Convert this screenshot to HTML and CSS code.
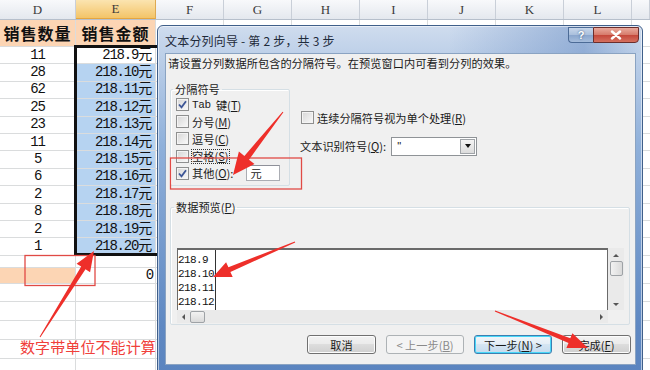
FILE: index.html
```html
<!DOCTYPE html>
<html lang="zh-CN">
<head>
<meta charset="utf-8">
<title>文本分列向导</title>
<link rel="stylesheet" href="styles.css">
</head>
<body>
<div class="sheet">
  <div class="colhead">
    <span>D</span><span class="on">E</span><span>F</span><span>G</span><span>H</span><span>I</span><span>J</span><span>K</span><span>L</span><span></span>
  </div>
  <div class="row title"><b>销售数量</b><b>销售金额</b><i></i></div>
  <div class="row"><span class="n">11</span><span class="v act">218.9元</span><i></i></div>
  <div class="row"><span class="n">28</span><span class="v">218.10元</span><i></i></div>
  <div class="row"><span class="n">62</span><span class="v">218.11元</span><i></i></div>
  <div class="row"><span class="n">25</span><span class="v">218.12元</span><i></i></div>
  <div class="row"><span class="n">23</span><span class="v">218.13元</span><i></i></div>
  <div class="row"><span class="n">11</span><span class="v">218.14元</span><i></i></div>
  <div class="row"><span class="n">5</span><span class="v">218.15元</span><i></i></div>
  <div class="row"><span class="n">6</span><span class="v">218.16元</span><i></i></div>
  <div class="row"><span class="n">2</span><span class="v">218.17元</span><i></i></div>
  <div class="row"><span class="n">8</span><span class="v">218.18元</span><i></i></div>
  <div class="row"><span class="n">2</span><span class="v">218.19元</span><i></i></div>
  <div class="row"><span class="n">1</span><span class="v">218.20元</span><i></i></div>
  <div class="row short"><span></span><span></span><i></i></div>
  <div class="row sum"><span class="peach"></span><span class="z">0</span><i></i></div>
  <div class="row tall"><span></span><span></span><i></i></div>
  <div class="row tall"><span></span><span></span><i></i></div>
  <div class="row tall"><span></span><span></span><i></i></div>
  <div class="row tall"><span></span><span></span><i></i></div>
  <div class="row tall"><span></span><span></span><i></i></div>
</div>
<div class="selbox"></div>

<div class="dlg">
  <div class="caption">
    <span class="ctitle">文本分列向导 - 第 2 步，共 3 步</span>
    <span class="cbtns"><span class="help">?</span><span class="close"><svg width="12" height="10" viewBox="0 0 12 10"><path d="M2 1.5 L10 8.5 M10 1.5 L2 8.5" stroke="#fff" stroke-width="2.4" stroke-linecap="round"/></svg></span></span>
  </div>
  <div class="client">
    <p class="instr">请设置分列数据所包含的分隔符号。在预览窗口内可看到分列的效果。</p>
    <div class="opts">
      <fieldset class="grp sep">
        <legend>分隔符号</legend>
        <label class="chk"><span class="cb on"><svg width="11" height="11" viewBox="0 0 11 11"><path d="M2 5.5 L4.5 8.3 L9 2.2" fill="none" stroke="#3d5696" stroke-width="1.8"/></svg></span><span class="mono">Tab</span>键(<u>T</u>)</label>
        <label class="chk"><span class="cb"></span>分号(<u>M</u>)</label>
        <label class="chk"><span class="cb"></span>逗号(<u>C</u>)</label>
        <label class="chk"><span class="cb"></span><span class="focus">空格(<u>S</u>)</span></label>
        <label class="chk"><span class="cb on"><svg width="11" height="11" viewBox="0 0 11 11"><path d="M2 5.5 L4.5 8.3 L9 2.2" fill="none" stroke="#3d5696" stroke-width="1.8"/></svg></span>其他(<u>O</u>):<span class="tb">元</span></label>
      </fieldset>
      <div class="right">
        <label class="chk"><span class="cb"></span>连续分隔符号视为单个处理(<u>R</u>)</label>
        <div class="qual"><span>文本识别符号(<u>Q</u>):</span><span class="combo"><span class="cval">"</span><span class="cdrop"><i class="tri"></i></span></span></div>
      </div>
    </div>
    <fieldset class="grp pvg">
      <legend>数据预览(<u>P</u>)</legend>
      <div class="pv">
        <div class="pvdata"><div class="pvcol">218.9<br>218.10<br>218.11<br>218.12</div></div>
        <div class="vs"><i class="up"></i><i class="thumb"></i><i class="dn"></i></div>
        <div class="hs"><i class="lt"></i><i class="hthumb"></i><i class="rt"></i></div>
        <div class="corner"></div>
      </div>
    </fieldset>
    <div class="btns">
      <span class="btn">取消</span>
      <span class="btn wide dis">&lt; 上一步(<u>B</u>)</span>
      <span class="btn wide def">下一步(<u>N</u>) &gt;</span>
      <span class="btn">完成(<u>F</u>)</span>
    </div>
  </div>
</div>

<svg class="marks" width="650" height="370" viewBox="0 0 650 370">
  <rect x="25" y="255.5" width="70" height="30" fill="none" stroke="#e04a45" stroke-width="1.3"/>
  <rect x="170.5" y="158" width="131" height="31" fill="none" stroke="#e04a45" stroke-width="1.3"/>
  <polygon fill="#ee2f2a" points="283.4,112.3 249,159.7 254.5,164 233,175 238.9,151.6 244.4,155.9 282.6,111.7"/>
  <polygon fill="#ee2f2a" points="295.2,242.5 230.4,271.9 232.7,276.9 213,277 226.1,262.3 228.4,267.3 294.8,241.5"/>
  <polygon fill="#ee2f2a" points="40.4,337.3 85.5,269.3 90.1,272.2 94,251 76.6,263.7 81.2,266.6 39.6,336.7"/>
  <polygon fill="#ee2f2a" points="494.8,311.5 568.5,342.9 566.4,348 588,348 572.4,333.2 570.3,338.3 495.2,310.5"/>
</svg>
<div class="note">数字带单位不能计算</div>
</body>
</html>
```
FILE: styles.css
```css
html, body {
  margin: 0;
  padding: 0;
}
body {
  width: 650px;
  height: 370px;
  overflow: hidden;
  position: relative;
  background: #fff;
  font-family: "Noto Sans CJK SC", "Liberation Sans", sans-serif;
  color: #000;
}

/* ---------- spreadsheet ---------- */
.sheet {
  width: 650px;
}
.colhead {
  display: grid;
  grid-template-columns: 76px 80px repeat(7, 68px) 1fr;
  height: 20px;
  box-sizing: border-box;
  background: linear-gradient(#f8f9fb, #e4e8ee);
  border-bottom: 1px solid #b6bfcb;
}
.colhead span {
  display: flex;
  align-items: center;
  justify-content: center;
  border-right: 1px solid #c9cfd8;
  font: 13px "Liberation Serif", "DejaVu Serif", serif;
  color: #3b3b3b;
}
.colhead .on {
  background: linear-gradient(#fbe4b0, #f3c468);
  border-right-color: #deaa52;
  border-bottom: 1px solid #e6a63e;
}
.row {
  display: grid;
  grid-template-columns: 76px 80px 1fr;
  height: 17.4px;
  box-sizing: border-box;
  border-bottom: 1px solid #dadcdd;
}
.row > span, .row > b {
  border-right: 1px solid #dadcdd;
  display: flex;
  align-items: center;
  white-space: nowrap;
  min-width: 0;
}
.row > i {
  background: repeating-linear-gradient(90deg, transparent 0 67px, #dadcdd 67px 68px);
}
.row.title {
  height: 27px;
}
.row.title b {
  background: #fcd5b4;
  justify-content: center;
  font-size: 16px;
  line-height: 20px;
  font-weight: 700;
  letter-spacing: 1px;
  color: #111;
}
.row.short { height: 12px; }
.row.sum { height: 16px; }
.row.tall { height: 18.8px; }
.n, .v, .z {
  font-family: "Liberation Mono", "Noto Sans CJK SC", monospace;
  font-size: 14px;
  line-height: 15px;
  letter-spacing: -1.2px;
  color: #111;
}
.n { justify-content: center; }
.v {
  justify-content: flex-end;
  padding-right: 4px;
  background: #b6d3f1;
}
.v.act { background: #fff; }
.z { justify-content: flex-end; padding-right: 2px; }
.peach { background: #fcd5b4; }
.selbox {
  position: absolute;
  left: 74px;
  top: 45px;
  width: 86px;
  height: 211px;
  box-sizing: border-box;
  border: 3px solid #111;
}

/* ---------- dialog ---------- */
.dlg {
  position: absolute;
  left: 157px;
  top: 25px;
  width: 486px;
  height: 352px;
  box-sizing: border-box;
  border: 1px solid #3f5f8a;
  border-radius: 6px 6px 0 0;
  background:
    linear-gradient(90deg, rgba(255,255,255,0) 60%, rgba(90,130,190,.45) 88%, rgba(255,255,255,0) 100%) top / 100% 27px no-repeat,
    linear-gradient(180deg, #cfdcee 0, #bfd1e9 26px, #8fb0da 120px, #5f88c2 300px, #5a84bf 100%);
  box-shadow: inset 0 0 0 1px rgba(255,255,255,.55);
  display: flex;
  flex-direction: column;
  padding: 0 6px 0 7px;
}
.caption {
  height: 27px;
  display: flex;
  align-items: flex-start;
  justify-content: space-between;
  flex-shrink: 0;
}
.ctitle {
  font-size: 12px;
  line-height: 14px;
  margin-top: 8px;
  color: #1e2a3a;
  letter-spacing: 0.2px;
}
.cbtns {
  display: flex;
  margin-top: 1px;
  margin-right: -3px;
}
.help, .close {
  height: 16px;
  display: flex;
  align-items: center;
  justify-content: center;
  box-sizing: border-box;
  border: 1px solid #4c6b96;
}
.help {
  width: 25px;
  border-radius: 0 0 0 4px;
  border-right: 0;
  background: linear-gradient(#c7d6ea, #a9bfdc 50%, #8aa6cd 51%, #a6bddc);
  color: #fff;
  font: bold 11px "Liberation Sans", sans-serif;
  text-shadow: 0 0 2px #2a4770;
}
.close {
  width: 46px;
  border-radius: 0 0 4px 0;
  background: linear-gradient(#e9a99c, #d67a6a 50%, #c4473a 51%, #d5705f);
  border-color: #6b2e2c;
}
.client {
  background: #f0f0f0;
  border: 1px solid #8aa3c2;
  height: 312px;
  box-sizing: border-box;
  display: flex;
  flex-direction: column;
  font-size: 11.2px;
  color: #1a1a1a;
}
.instr {
  margin: 2px 0 0 2px;
  line-height: 14px;
  letter-spacing: 0.05px;
}
.opts {
  display: flex;
  margin-top: 12px;
}
.grp {
  margin: 0;
  border: 1px solid #d5dfe5;
  box-shadow: 1px 1px 0 #fff inset;
  border-radius: 2px;
  min-width: 0;
}
.grp legend {
  padding: 0 2px;
  margin-left: -3px;
  line-height: 14px;
  font-size: 11.2px;
}
.sep {
  width: 120px;
  height: 104px;
  margin-left: 4px;
  box-sizing: border-box;
  padding: 0 0 0 5px;
}
.chk {
  display: flex;
  align-items: center;
  height: 17.2px;
  white-space: nowrap;
}
.cb {
  width: 13px;
  height: 13px;
  box-sizing: border-box;
  border: 1px solid #8e8f8f;
  background: linear-gradient(135deg, #d6d6d6, #fafafa);
  box-shadow: inset 0 0 0 1px #f4f4f4;
  margin-right: 3px;
  display: flex;
  align-items: center;
  justify-content: center;
  flex-shrink: 0;
}
.mono {
  font-family: "Liberation Mono", monospace;
  font-size: 11px;
  letter-spacing: -0.3px;
  margin-right: 5px;
}
.focus {
  outline: 1px dotted #333;
  outline-offset: 0;
  line-height: 13px;
}
.tb {
  margin-left: 13px;
  width: 34px;
  height: 16px;
  box-sizing: border-box;
  background: #fff;
  border: 1px solid #abadb3;
  border-top-color: #8e9099;
  padding-left: 3px;
  line-height: 14px;
}
.right {
  margin-left: 10px;
  padding-top: 27px;
  display: flex;
  flex-direction: column;
}
.right .chk { margin-left: 1px; }
.qual {
  display: flex;
  align-items: center;
  margin-top: 10px;
  height: 20px;
}
.combo {
  margin-left: 5px;
  width: 86px;
  height: 19px;
  box-sizing: border-box;
  border: 1px solid #8f9397;
  background: #fff;
  display: flex;
  justify-content: space-between;
}
.cval {
  padding: 0 0 0 5px;
  line-height: 16px;
  font-family: "Liberation Sans", sans-serif;
}
.cdrop {
  width: 15px;
  margin: 1px;
  border: 1px solid #a0a4a8;
  background: linear-gradient(#f4f4f4, #dcdcdc);
  display: flex;
  align-items: center;
  justify-content: center;
  box-sizing: border-box;
}
.tri {
  width: 0;
  height: 0;
  border-left: 3.5px solid transparent;
  border-right: 3.5px solid transparent;
  border-top: 4px solid #111;
}
.pvg {
  margin: 14px 0 0 4px;
  width: 460px;
  height: 125px;
  box-sizing: border-box;
  padding: 34px 0 0 6px;
}
.pv {
  display: grid;
  grid-template-columns: 431px 16px;
  grid-template-rows: 62px 13px;
}
.pvdata {
  background: #fff;
  border-top: 2px solid #6a6a6a;
  border-left: 1px solid #6a6a6a;
  border-right: 1px solid #6a6a6a;
  overflow: hidden;
}
.pvcol {
  width: 38px;
  height: 100%;
  border-right: 1px solid #333;
  font-family: "Liberation Mono", monospace;
  font-size: 11px;
  letter-spacing: -0.6px;
  line-height: 14px;
  padding-top: 3px;
  box-sizing: border-box;
  color: #111;
}
.vs {
  background: #eaeaea;
  display: flex;
  flex-direction: column;
  align-items: center;
  padding: 6px 0 4px;
  box-sizing: border-box;
}
.up, .dn {
  width: 0;
  height: 0;
  border-left: 3px solid transparent;
  border-right: 3px solid transparent;
}
.up { border-bottom: 3px solid #555; }
.dn { border-top: 3px solid #555; margin-top: auto; }
.thumb {
  width: 13px;
  height: 15px;
  margin-top: 4px;
  box-sizing: border-box;
  border: 1px solid #9ea2a6;
  border-radius: 2px;
  background: linear-gradient(90deg, #f2f2f2, #dadada);
}
.hs {
  background: #eaeaea;
  display: flex;
  align-items: center;
  padding: 0 5px 0 5px;
}
.lt, .rt {
  width: 0;
  height: 0;
  border-top: 3px solid transparent;
  border-bottom: 3px solid transparent;
}
.lt { border-right: 3px solid #555; }
.rt { border-left: 3px solid #555; margin-left: auto; }
.hthumb {
  width: 15px;
  height: 12px;
  margin-left: 5px;
  box-sizing: border-box;
  border: 1px solid #9ea2a6;
  border-radius: 2px;
  background: linear-gradient(#f2f2f2, #dadada);
}
.corner { background: #f0f0f0; }
.btns {
  display: flex;
  justify-content: flex-end;
  gap: 10px;
  margin-top: 10px;
  padding-right: 4px;
}
.btn {
  width: 69px;
  height: 19px;
  box-sizing: border-box;
  border: 1px solid #707070;
  border-radius: 3px;
  background: linear-gradient(#f2f2f2 0%, #ebebeb 45%, #dddddd 50%, #cfcfcf 100%);
  box-shadow: inset 0 0 0 1px #fcfcfc;
  display: flex;
  align-items: center;
  justify-content: center;
  font-size: 11.2px;
  color: #1a1a1a;
  white-space: nowrap;
}
.btn.wide { width: 78px; }
.btn.dis {
  border-color: #adb2b5;
  background: #f4f4f4;
  color: #8a8a8a;
  box-shadow: none;
}
.btn.def {
  border-color: #3c7fb1;
  box-shadow: inset 0 0 0 1px #48d7f8;
  background: linear-gradient(#f1f6fa 0%, #e5eef6 45%, #d5e5f2 50%, #c5dbee 100%);
}

/* ---------- annotations ---------- */
.marks {
  position: absolute;
  left: 0;
  top: 0;
  pointer-events: none;
}
.note {
  position: absolute;
  left: 20px;
  top: 337px;
  font-size: 15px;
  line-height: 20px;
  color: #f0403a;
  letter-spacing: 0.1px;
}
```
